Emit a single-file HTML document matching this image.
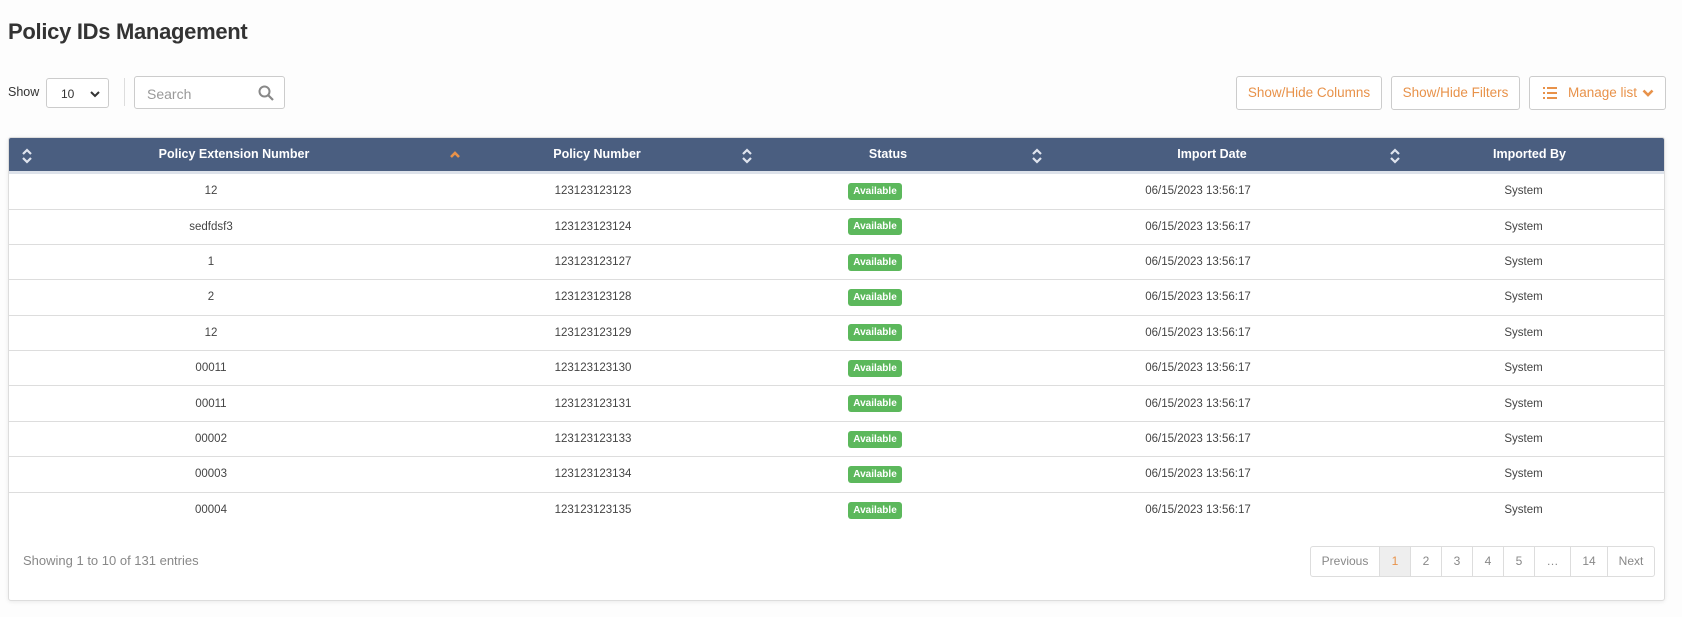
<!DOCTYPE html>
<html><head><meta charset="utf-8"><style>
*{box-sizing:border-box;margin:0;padding:0}
body{width:1682px;height:617px;background:#fdfdfd;font-family:"Liberation Sans",sans-serif;color:#444;position:relative;overflow:hidden}
h1{position:absolute;left:8px;top:19px;font-size:22px;font-weight:bold;color:#333;letter-spacing:-0.3px}
.show{position:absolute;left:8px;top:85px;font-size:12.5px;color:#333}
.sel{position:absolute;left:46px;top:78px;width:63px;height:30px;border:1px solid #ccc;border-radius:3px;background:#fff;font-size:12px;padding:8px 0 0 14px;color:#333}
.sel svg{position:absolute;right:8px;top:11px}
.vsep{position:absolute;left:124px;top:78px;width:1px;height:28px;background:#ddd}
.search{position:absolute;left:134px;top:76px;width:151px;height:33px;border:1px solid #ccc;border-radius:3px;background:#fff;font-size:14px;color:#999;padding:9px 0 0 12px}
.search svg{position:absolute;right:10px;top:8px}
.btn{position:absolute;top:76px;height:34px;border:1px solid #ccc;border-radius:3px;background:#fff;color:#e8924a;font-size:13.5px;text-align:center;line-height:32px}
.card{position:absolute;left:8px;top:137px;width:1657px;height:464px;background:#fff;border:1px solid #ddd;border-radius:3px;box-shadow:0 1px 4px rgba(0,0,0,.08);overflow:hidden}
table{border-collapse:collapse;width:100%;table-layout:fixed}
th{background:#4a5e80;color:#fff;font-size:12.5px;font-weight:bold;height:34px;position:relative;padding-left:8px;border-bottom:3px solid #dde2ea}
th svg{position:absolute;left:2px;top:10px}
th:first-child svg{left:12px}
th:first-child{padding-left:12px}
td{height:35.4px;font-size:11.5px;text-align:center;border-bottom:1px solid #ddd;color:#444;padding:0}
td:nth-child(1){padding-right:34px}
td:nth-child(3){padding-right:18px}
td:nth-child(4){padding-right:20px}
td:nth-child(5){padding-right:4px}
tr.first td{height:37px}
tr.last td{border-bottom:none}
.badge{display:inline-block;background:#5cb85c;color:#fff;font-size:10px;font-weight:bold;padding:3px 5px;border-radius:3px}
.info{position:absolute;left:23px;top:553px;font-size:13px;color:#888}
.pag{position:absolute;left:1310px;top:546px;height:31px;display:flex;border:1px solid #ddd;border-radius:3px;background:#fff;font-size:12px;color:#888}
.pag span{border-left:1px solid #ddd;line-height:29px;text-align:center}
.pag span:first-child{border-left:none}
</style></head><body>
<h1>Policy IDs Management</h1>
<div class="show">Show</div>
<div class="sel">10<svg width="10" height="8" viewBox="0 0 10 8"><path d="M1 2l4 4 4-4" stroke="#333" stroke-width="2" fill="none"/></svg></div>
<div class="vsep"></div>
<div class="search">Search<svg width="16" height="16" viewBox="0 0 16 16"><circle cx="6.5" cy="6.5" r="5" stroke="#888" stroke-width="2" fill="none"/><path d="M10 10l5 5" stroke="#888" stroke-width="2.2"/></svg></div>
<div class="btn" style="left:1236px;width:146px">Show/Hide Columns</div>
<div class="btn" style="left:1391px;width:129px">Show/Hide Filters</div>
<div class="btn" style="left:1529px;width:137px;text-align:left;padding-left:38px">Manage list
<svg style="position:absolute;left:13px;top:10px" width="14" height="12" viewBox="0 0 14 12"><path d="M0 1h2M4 1h10M0 6h2M4 6h10M0 11h2M4 11h10" stroke="#e8924a" stroke-width="2"/></svg>
<svg style="position:absolute;left:112px;top:12px" width="12" height="9" viewBox="0 0 12 9"><path d="M1.5 1.5l4.5 4.5 4.5-4.5" stroke="#e8924a" stroke-width="2.6" fill="none"/></svg></div>
<div class="card">
<table>
<colgroup><col style="width:438px"><col style="width:292px"><col style="width:290px"><col style="width:358px"><col></colgroup>
<tr>
<th><svg width="12" height="16" viewBox="0 0 12 16"><path d="M2 6l4-4 4 4M2 10l4 4 4-4" stroke="#dfe4ee" stroke-width="2.2" fill="none"/></svg>Policy Extension Number</th>
<th><svg width="12" height="16" viewBox="0 0 12 16"><path d="M2 9l4-4 4 4" stroke="#e8924a" stroke-width="2.6" fill="none"/></svg>Policy Number</th>
<th><svg width="12" height="16" viewBox="0 0 12 16"><path d="M2 6l4-4 4 4M2 10l4 4 4-4" stroke="#dfe4ee" stroke-width="2.2" fill="none"/></svg>Status</th>
<th><svg width="12" height="16" viewBox="0 0 12 16"><path d="M2 6l4-4 4 4M2 10l4 4 4-4" stroke="#dfe4ee" stroke-width="2.2" fill="none"/></svg>Import Date</th>
<th><svg width="12" height="16" viewBox="0 0 12 16"><path d="M2 6l4-4 4 4M2 10l4 4 4-4" stroke="#dfe4ee" stroke-width="2.2" fill="none"/></svg>Imported By</th>
</tr>
<tr class="first"><td>12</td><td>123123123123</td><td><span class="badge">Available</span></td><td>06/15/2023 13:56:17</td><td>System</td></tr>
<tr><td>sedfdsf3</td><td>123123123124</td><td><span class="badge">Available</span></td><td>06/15/2023 13:56:17</td><td>System</td></tr>
<tr><td>1</td><td>123123123127</td><td><span class="badge">Available</span></td><td>06/15/2023 13:56:17</td><td>System</td></tr>
<tr><td>2</td><td>123123123128</td><td><span class="badge">Available</span></td><td>06/15/2023 13:56:17</td><td>System</td></tr>
<tr><td>12</td><td>123123123129</td><td><span class="badge">Available</span></td><td>06/15/2023 13:56:17</td><td>System</td></tr>
<tr><td>00011</td><td>123123123130</td><td><span class="badge">Available</span></td><td>06/15/2023 13:56:17</td><td>System</td></tr>
<tr><td>00011</td><td>123123123131</td><td><span class="badge">Available</span></td><td>06/15/2023 13:56:17</td><td>System</td></tr>
<tr><td>00002</td><td>123123123133</td><td><span class="badge">Available</span></td><td>06/15/2023 13:56:17</td><td>System</td></tr>
<tr><td>00003</td><td>123123123134</td><td><span class="badge">Available</span></td><td>06/15/2023 13:56:17</td><td>System</td></tr>
<tr class="last"><td>00004</td><td>123123123135</td><td><span class="badge">Available</span></td><td>06/15/2023 13:56:17</td><td>System</td></tr>
</table>
</div>
<div class="info">Showing 1 to 10 of 131 entries</div>
<div class="pag"><span style="width:68px">Previous</span><span style="width:31px;background:#eee;color:#e8924a">1</span><span style="width:31px">2</span><span style="width:31px">3</span><span style="width:31px">4</span><span style="width:31px">5</span><span style="width:36px">…</span><span style="width:37px">14</span><span style="width:47px">Next</span></div>
</body></html>
